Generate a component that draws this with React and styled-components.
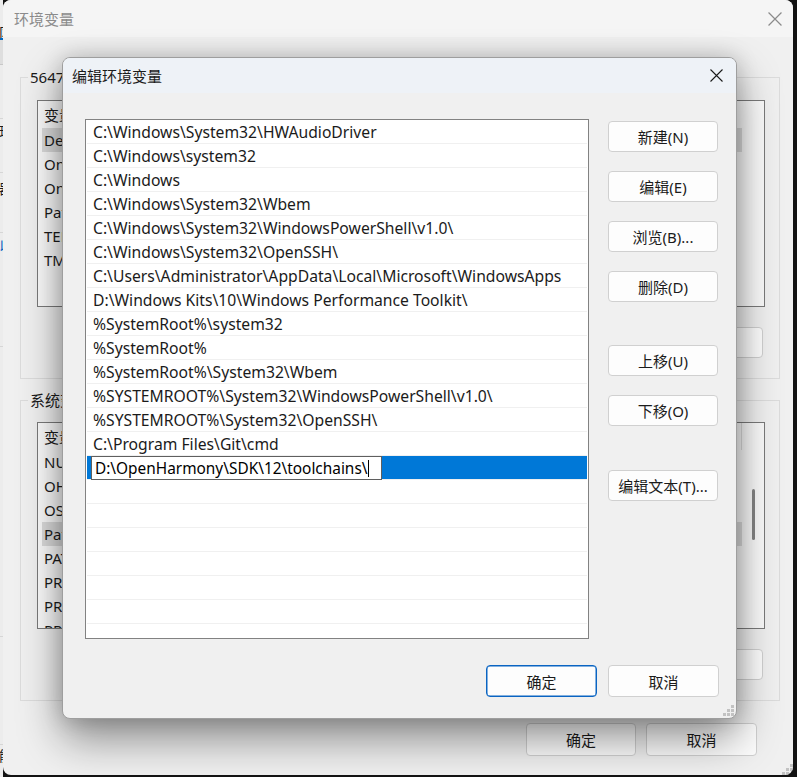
import React from "react";
import styled, { createGlobalStyle } from "styled-components";

const FONT = `"Noto Sans", "Noto Sans CJK SC", sans-serif`;

const GlobalStyle = createGlobalStyle`
  html, body { margin: 0; padding: 0; background: #121212; }
  body { font-family: ${FONT}; font-size: 15px; color: #000; }
  * { box-sizing: border-box; }
`;

const Screen = styled.div`
  display: flex;
  align-items: flex-start;
  width: 797px;
  height: 777px;
  overflow: hidden;
  background: #121212;
`;

/* sliver of another window at the far left */
const Strip = styled.div`
  width: 3px;
  height: 777px;
  overflow: hidden;
  background: #ececec;
  display: flex;
  flex-direction: column;
`;
const StripCell = styled.div`
  height: ${(p) => p.$h}px;
  flex: none;
  display: flex;
  align-items: center;
  justify-content: flex-end;
  background: ${(p) => p.$bg || "transparent"};
  border-bottom: ${(p) => (p.$line ? `1px solid ${p.$line}` : "none")};
  color: ${(p) => p.$color || "#1b1b1b"};
  font-size: 14px;
  white-space: nowrap;
`;
const StripGlyph = styled.span`
  margin-right: -10px;
`;

/* ---------- outer window (inactive) ---------- */
const OuterWindow = styled.div`
  position: relative;
  flex: none;
  width: 790px;
  height: 775px;
  background: #f0f0f0;
  border-radius: 8px;
  overflow: hidden;
  display: flex;
  flex-direction: column;
`;
const OuterTitleBar = styled.div`
  height: 37px;
  flex: none;
  display: flex;
  align-items: center;
  justify-content: space-between;
  padding: 0 11px 0 11px;
  background: #f5f5f5;
  color: #8b8b8b;
`;
const OuterBody = styled.div`
  padding: 30px 13px 0 17px;
  display: flex;
  flex-direction: column;
`;
const Group = styled.fieldset`
  margin: ${(p) => p.$mt || 0}px 0 0 0;
  padding: ${(p) => p.$pt}px 14px 20px 16px;
  border: 1px solid #dcdcdc;
  min-width: 0;
  display: flex;
  flex-direction: column;
`;
const Legend = styled.legend`
  padding: 0 2px;
  margin-left: -9px;
  line-height: 20px;
  font-size: 15px;
  color: #1b1b1b;
`;
const VarList = styled.div`
  height: 207px;
  border: 1px solid #7a7a7a;
  background: #fbfbfb;
  display: flex;
  overflow: hidden;
`;
const VarRows = styled.div`
  flex: 1;
  display: flex;
  flex-direction: column;
  padding: 0 0 0 4px;
  min-width: 0;
  overflow: hidden;
`;
const VarHeader = styled.div`
  height: 27px;
  flex: none;
  display: flex;
  align-items: center;
  border-right: ${(p) => (p.$divider ? "1px solid #dedede" : "none")};
  color: #1b1b1b;
  white-space: nowrap;
`;
const VarRow = styled.div`
  height: 24px;
  flex: none;
  display: flex;
  align-items: center;
  color: #1b1b1b;
  white-space: nowrap;
`;
const VarName = styled.span`
  width: 700px;
  flex: none;
  height: 24px;
  display: flex;
  align-items: center;
  padding-left: 2px;
  background: ${(p) => (p.$hl ? "#dcdcdc" : "transparent")};
`;
const VarValue = styled.span`
  flex: none;
  padding-left: 80px;
`;
const VScroll = styled.div`
  width: 22px;
  flex: none;
  display: flex;
  justify-content: center;
  padding-top: 66px;
`;
const Thumb = styled.div`
  width: 3px;
  height: 51px;
  border-radius: 2px;
  background: #858585;
`;
const ButtonRow = styled.div`
  display: flex;
  justify-content: flex-end;
  gap: 10px;
  margin-top: 20px;
  padding-right: 2px;
`;
const Footer = styled.div`
  display: flex;
  justify-content: flex-end;
  gap: ${(p) => p.$gap}px;
  margin-top: ${(p) => p.$mt}px;
  padding-right: ${(p) => p.$pr}px;
  padding-bottom: ${(p) => p.$pb || 0}px;
`;

const Btn = styled.button`
  width: ${(p) => p.$w || 110}px;
  height: ${(p) => p.$h || 31}px;
  margin-top: ${(p) => p.$mt || 0}px;
  flex: none;
  padding: 0;
  background: #fdfdfd;
  border: 1px solid ${(p) => (p.$primary ? "#0a64c2" : "#d0d0d0")};
  box-shadow: ${(p) => (p.$primary ? "inset 0 0 0 0.5px #0a64c2" : "none")};
  border-radius: 4px;
  font-family: ${FONT};
  font-size: 15px;
  color: #1b1b1b;
  display: flex;
  align-items: center;
  justify-content: center;
`;

/* ---------- front dialog ---------- */
const Dialog = styled.div`
  position: absolute;
  left: 59px;
  top: 57px;
  width: 675px;
  background: #f0f0f0;
  border: 1px solid #9e9e9e;
  border-radius: 8px;
  overflow: hidden;
  box-shadow: 0 20px 44px rgba(0, 0, 0, 0.42), 0 0 22px rgba(0, 0, 0, 0.18);
  display: flex;
  flex-direction: column;
`;
const DialogTitle = styled.div`
  height: 35px;
  flex: none;
  display: flex;
  align-items: center;
  justify-content: space-between;
  padding: 0 13px 0 9px;
  background: #eef2f7;
  color: #1b1b1b;
`;
const DialogBody = styled.div`
  display: flex;
  gap: 19px;
  padding: 26px 18px 0 22px;
`;
const PathList = styled.div`
  width: 504px;
  height: 520px;
  flex: none;
  border: 1px solid #828282;
  background: #fff;
  padding: 0 1px;
  overflow: hidden;
  display: flex;
  flex-direction: column;
`;
const PathRow = styled.div`
  height: 24px;
  flex: none;
  display: flex;
  align-items: center;
  padding-left: ${(p) => (p.$editing ? 4 : 6)}px;
  border-bottom: 1px solid #f0f0f0;
  background: ${(p) => (p.$editing ? "#0078d7" : "#fff")};
  white-space: nowrap;
  color: #1b1b1b;
  font-size: 15.7px;
`;
const EditBox = styled.div`
  width: 291px;
  height: 24px;
  margin-top: 1px;
  flex: none;
  display: flex;
  align-items: center;
  padding-left: 3px;
  background: #fff;
  border: 1px solid #5f5f5f;
  color: #000;
  font-size: 15.4px;
`;
const Caret = styled.span`
  display: inline-block;
  width: 1px;
  height: 17px;
  margin-left: 1px;
  background: #000;
`;
const SideButtons = styled.div`
  display: flex;
  flex-direction: column;
  gap: 19px;
  padding-top: 2px;
`;
const Grip = styled.svg`
  position: absolute;
  right: ${(p) => p.$r}px;
  bottom: ${(p) => p.$b}px;
`;

const CloseIcon = ({ color, size = 13 }) => (
  <svg width={size} height={size} viewBox="0 0 13 13">
    <path d="M0.5 0.5 L12.5 12.5 M12.5 0.5 L0.5 12.5" stroke={color} strokeWidth="1.1" />
  </svg>
);

const GripIcon = ({ r, b }) => (
  <Grip $r={r} $b={b} width="11" height="11" viewBox="0 0 11 11">
    {[
      [8, 0],
      [8, 4],
      [4, 4],
      [8, 8],
      [4, 8],
      [0, 8],
    ].map(([x, y], i) => (
      <rect key={i} x={x} y={y} width="3" height="3" fill="#c2c2c2" />
    ))}
  </Grip>
);

const paths = [
  "C:\\Windows\\System32\\HWAudioDriver",
  "C:\\Windows\\system32",
  "C:\\Windows",
  "C:\\Windows\\System32\\Wbem",
  "C:\\Windows\\System32\\WindowsPowerShell\\v1.0\\",
  "C:\\Windows\\System32\\OpenSSH\\",
  "C:\\Users\\Administrator\\AppData\\Local\\Microsoft\\WindowsApps",
  "D:\\Windows Kits\\10\\Windows Performance Toolkit\\",
  "%SystemRoot%\\system32",
  "%SystemRoot%",
  "%SystemRoot%\\System32\\Wbem",
  "%SYSTEMROOT%\\System32\\WindowsPowerShell\\v1.0\\",
  "%SYSTEMROOT%\\System32\\OpenSSH\\",
  "C:\\Program Files\\Git\\cmd",
];
const editingValue = "D:\\OpenHarmony\\SDK\\12\\toolchains\\";

const userVars = [
  ["DevEco Studio", "D:\\Huawei\\DevEco Studio\\bin;", true],
  ["OneDrive", "C:\\Users\\Administrator\\OneDrive"],
  ["OneDriveConsumer", "C:\\Users\\Administrator\\OneDrive"],
  ["Path", "C:\\Users\\Administrator\\AppData\\Local\\Microsoft\\WindowsApps;"],
  ["TEMP", "C:\\Users\\Administrator\\AppData\\Local\\Temp"],
  ["TMP", "C:\\Users\\Administrator\\AppData\\Local\\Temp"],
];
const sysVars = [
  ["NUMBER_OF_PROCESSORS", "16"],
  ["OHOS_SDK_HOME", "D:\\OpenHarmony\\SDK"],
  ["OS", "Windows_NT"],
  ["Path", "C:\\Windows\\System32\\HWAudioDriver;C:\\Windows\\system32;", true],
  ["PATHEXT", ".COM;.EXE;.BAT;.CMD;.VBS;.VBE;.JS;.JSE;.WSF;.WSH;.MSC"],
  ["PROCESSOR_ARCHITECTURE", "AMD64"],
  ["PROCESSOR_IDENTIFIER", "AMD64 Family 25 Model 80 Stepping 0"],
  ["PROCESSOR_LEVEL", "25"],
];

const stripCells = [
  { h: 26 },
  { h: 12, g: "区" },
  { h: 2, bg: "#0067c0" },
  { h: 25, bg: "#dedede", line: "#c8c8c8" },
  { h: 54, line: "#d6d6d6" },
  { h: 24, g: "理" },
  { h: 30, line: "#d6d6d6" },
  { h: 30, g: "器" },
  { h: 30, line: "#d6d6d6" },
  { h: 24, g: "以", color: "#0a64c2" },
  { h: 90, line: "#d6d6d6" },
  { h: 290, line: "#d6d6d6" },
  { h: 108, line: "#d6d6d6" },
  { h: 20, g: "能" },
];

const VarTable = ({ rows, scroll }) => (
  <VarList>
    <VarRows>
      <VarHeader $divider={scroll}>
        <VarName>变量</VarName>
        <VarValue>值</VarValue>
      </VarHeader>
      {rows.map(([n, v, hl]) => (
        <VarRow key={n}>
          <VarName $hl={hl}>{n}</VarName>
          <VarValue>{v}</VarValue>
        </VarRow>
      ))}
    </VarRows>
    {scroll ? (
      <VScroll>
        <Thumb />
      </VScroll>
    ) : null}
  </VarList>
);

export default function App() {
  return (
    <>
      <GlobalStyle />
      <Screen>
        <Strip>
          {stripCells.map((c, i) => (
            <StripCell key={i} $h={c.h} $bg={c.bg} $line={c.line} $color={c.color}>
              {c.g ? <StripGlyph>{c.g}</StripGlyph> : null}
            </StripCell>
          ))}
        </Strip>

        <OuterWindow>
          <OuterTitleBar>
            <span>环境变量</span>
            <CloseIcon color="#8b8b8b" size={14} />
          </OuterTitleBar>

          <OuterBody>
            <Group $pt={13}>
              <Legend>5647 的用户变量(U)</Legend>
              <VarTable rows={userVars} />
              <ButtonRow>
                <Btn $w={111}>新建(N)...</Btn>
                <Btn $w={111}>编辑(E)...</Btn>
                <Btn $w={111}>删除(D)</Btn>
              </ButtonRow>
            </Group>

            <Group $mt={11} $pt={12}>
              <Legend>系统变量(S)</Legend>
              <VarTable rows={sysVars} scroll />
              <ButtonRow>
                <Btn $w={111}>新建(W)...</Btn>
                <Btn $w={111}>编辑(I)...</Btn>
                <Btn $w={111}>删除(L)</Btn>
              </ButtonRow>
            </Group>

            <Footer $gap={10} $mt={22} $pr={23}>
              <Btn $w={110} $h={33}>确定</Btn>
              <Btn $w={111} $h={33}>取消</Btn>
            </Footer>
          </OuterBody>
          <GripIcon r={0} b={0} />

          <Dialog>
            <DialogTitle>
              <span>编辑环境变量</span>
              <CloseIcon color="#1b1b1b" />
            </DialogTitle>
            <DialogBody>
              <PathList>
                {paths.map((p) => (
                  <PathRow key={p}>{p}</PathRow>
                ))}
                <PathRow $editing>
                  <EditBox>
                    {editingValue}
                    <Caret />
                  </EditBox>
                </PathRow>
                {Array.from({ length: 8 }).map((_, i) => (
                  <PathRow key={"e" + i} />
                ))}
              </PathList>
              <SideButtons>
                <Btn>新建(N)</Btn>
                <Btn>编辑(E)</Btn>
                <Btn>浏览(B)...</Btn>
                <Btn>删除(D)</Btn>
                <Btn $mt={24}>上移(U)</Btn>
                <Btn>下移(O)</Btn>
                <Btn $mt={25}>编辑文本(T)...</Btn>
              </SideButtons>
            </DialogBody>
            <Footer $gap={11} $mt={26} $pr={17} $pb={21}>
              <Btn $w={111} $h={32} $primary>
                确定
              </Btn>
              <Btn $w={111} $h={32}>
                取消
              </Btn>
            </Footer>
            <GripIcon r={2} b={2} />
          </Dialog>
        </OuterWindow>
      </Screen>
    </>
  );
}
